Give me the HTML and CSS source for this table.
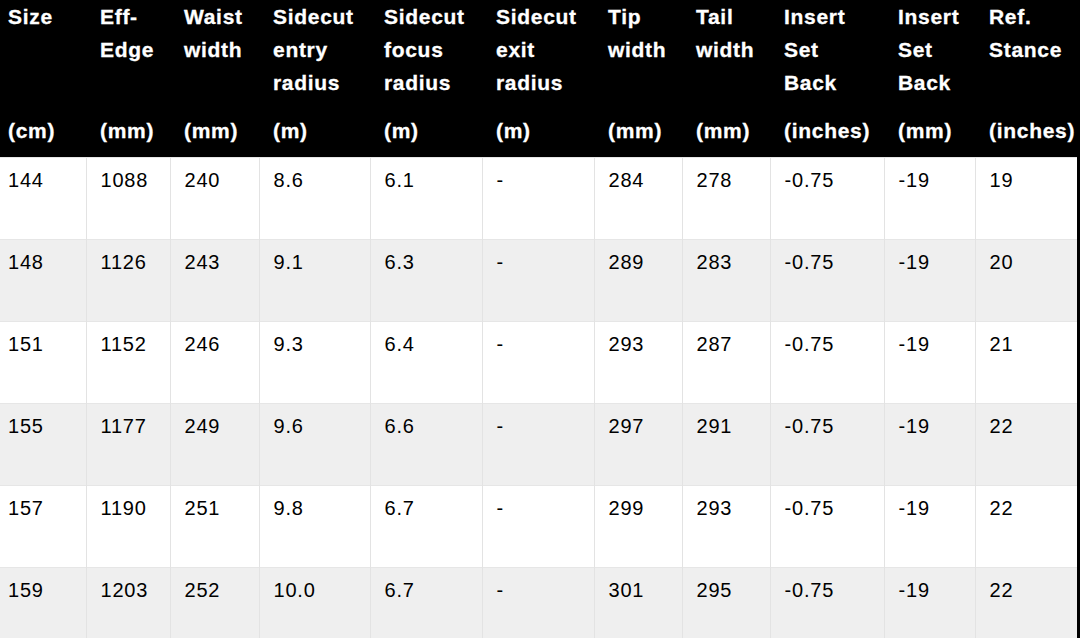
FILE: index.html
```html
<!DOCTYPE html>
<html>
<head>
<meta charset="utf-8">
<link rel="stylesheet" href="styles.css">
</head>
<body>
<div class="wrap">
<table class="specs">
  <colgroup>
    <col class="c1"><col class="c2"><col class="c3"><col class="c4"><col class="c5"><col class="c6"><col class="c7"><col class="c8"><col class="c9"><col class="c10"><col class="c11">
  </colgroup>
  <thead>
    <tr class="names">
      <th>Size</th>
      <th>Eff-<br>Edge</th>
      <th>Waist<br>width</th>
      <th>Sidecut<br>entry<br>radius</th>
      <th>Sidecut<br>focus<br>radius</th>
      <th>Sidecut<br>exit<br>radius</th>
      <th>Tip<br>width</th>
      <th>Tail<br>width</th>
      <th>Insert<br>Set<br>Back</th>
      <th>Insert<br>Set<br>Back</th>
      <th>Ref.<br>Stance</th>
    </tr>
    <tr class="units">
      <th>(cm)</th><th>(mm)</th><th>(mm)</th><th>(m)</th><th>(m)</th><th>(m)</th><th>(mm)</th><th>(mm)</th><th>(inches)</th><th>(mm)</th><th>(inches)</th>
    </tr>
  </thead>
  <tbody>
    <tr><td>144</td><td>1088</td><td>240</td><td>8.6</td><td>6.1</td><td>-</td><td>284</td><td>278</td><td>-0.75</td><td>-19</td><td>19</td></tr>
    <tr><td>148</td><td>1126</td><td>243</td><td>9.1</td><td>6.3</td><td>-</td><td>289</td><td>283</td><td>-0.75</td><td>-19</td><td>20</td></tr>
    <tr><td>151</td><td>1152</td><td>246</td><td>9.3</td><td>6.4</td><td>-</td><td>293</td><td>287</td><td>-0.75</td><td>-19</td><td>21</td></tr>
    <tr><td>155</td><td>1177</td><td>249</td><td>9.6</td><td>6.6</td><td>-</td><td>297</td><td>291</td><td>-0.75</td><td>-19</td><td>22</td></tr>
    <tr><td>157</td><td>1190</td><td>251</td><td>9.8</td><td>6.7</td><td>-</td><td>299</td><td>293</td><td>-0.75</td><td>-19</td><td>22</td></tr>
    <tr><td>159</td><td>1203</td><td>252</td><td>10.0</td><td>6.7</td><td>-</td><td>301</td><td>295</td><td>-0.75</td><td>-19</td><td>22</td></tr>
  </tbody>
</table>
</div>
</body>
</html>
```
FILE: styles.css
```css
html, body {
  margin: 0;
  padding: 0;
  background: #000;
  overflow: hidden;
}
.wrap {
  width: 1077px;
  overflow: hidden;
}
.specs {
  border-collapse: collapse;
  table-layout: fixed;
  width: 1083px;
  margin-left: -6px;
  font-family: "Liberation Sans", Arial, sans-serif;
}
.c1 { width: 92px; }
.c2 { width: 84px; }
.c3 { width: 89px; }
.c4 { width: 111px; }
.c5 { width: 112px; }
.c6 { width: 112px; }
.c7 { width: 88px; }
.c8 { width: 88px; }
.c9 { width: 114px; }
.c10 { width: 91px; }
.c11 { width: 102px; }

.specs th {
  background: #000;
  color: #fff;
  font-weight: bold;
  font-size: 21px;
  letter-spacing: 0.7px;
  line-height: 33px;
  text-align: left;
  vertical-align: top;
  padding: 0 0 0 14px;
  white-space: nowrap;
  -webkit-text-stroke: 0.3px #fff;
}
.names th {
  height: 106px;
  box-sizing: border-box;
  padding-top: 0;
}
.units th {
  height: 51px;
  box-sizing: border-box;
  padding-top: 8px;
}
.specs td {
  font-size: 20px;
  letter-spacing: 0.8px;
  line-height: 24px;
  color: #000;
  vertical-align: top;
  padding: 10px 0 0 14px;
  height: 82px;
  box-sizing: border-box;
  border-left: 1px solid #e3e3e3;
  border-top: 1px solid #e6e6e6;
}
.specs td:first-child {
  border-left: none;
}
.specs tbody tr:nth-child(odd) td { background: #fff; }
.specs tbody tr:nth-child(even) td { background: #efefef; }
```
